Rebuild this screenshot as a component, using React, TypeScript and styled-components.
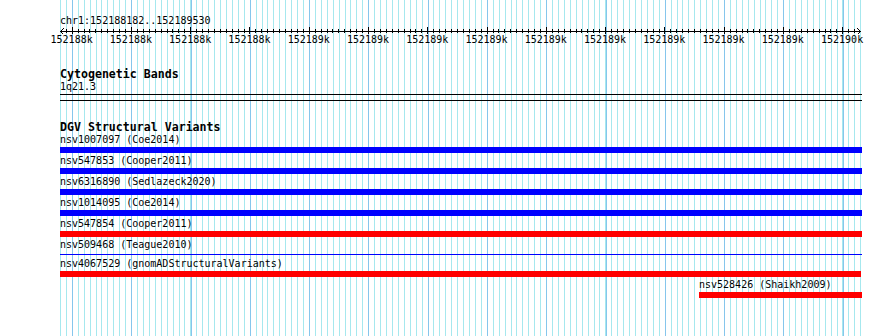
import React from "react";
import styled, { createGlobalStyle } from "styled-components";

const GlobalStyle = createGlobalStyle`
  html, body { margin: 0; padding: 0; background: #fff; }
`;

const MINOR = 5.928;
const MAJOR = MINOR * 10;
const GRID_LEFT = 59.8;
const GRID_LINES = 136;

type Variant = {
  name: string;
  study: string;
  color: "blue" | "red";
  thin?: boolean;
  left?: number;
  width?: number;
};

const variants: Variant[] = [
  { name: "nsv1007097", study: "Coe2014", color: "blue" },
  { name: "nsv547853", study: "Cooper2011", color: "blue" },
  { name: "nsv6316890", study: "Sedlazeck2020", color: "blue" },
  { name: "nsv1014095", study: "Coe2014", color: "blue" },
  { name: "nsv547854", study: "Cooper2011", color: "red" },
  { name: "nsv509468", study: "Teague2010", color: "blue", thin: true },
  { name: "nsv4067529", study: "gnomADStructuralVariants", color: "red", width: 801 },
  { name: "nsv528426", study: "Shaikh2009", color: "red", left: 639, width: 163 },
];

const tickLabels = [
  "152188k", "152188k", "152188k", "152188k", "152189k", "152189k", "152189k",
  "152189k", "152189k", "152189k", "152189k", "152189k", "152189k", "152190k",
];

const Panel = styled.div`
  width: 890px;
  height: 336px;
  overflow: hidden;
  background-color: #fff;
  background-image:
    repeating-linear-gradient(to right, #86c6ec 0 1px, transparent 1px ${MAJOR}px),
    repeating-linear-gradient(to right, #a6e8ee 0 1px, transparent 1px ${MINOR}px);
  background-position: ${GRID_LEFT + MINOR * 2}px 0, ${GRID_LEFT}px 0;
  background-size: 772px 100%, 801px 100%;
  background-repeat: no-repeat;
  font-family: "DejaVu Sans Mono", "Liberation Mono", monospace;
  font-size: 10px;
  line-height: 12px;
  color: #000;
  padding-top: 15px;
  box-sizing: border-box;
`;

const Indented = styled.div`
  padding-left: 60px;
  width: 802px;
`;

const Ruler = styled.svg`
  display: block;
`;

const TickRow = styled.div`
  display: flex;
  padding-left: ${GRID_LEFT + MINOR * 2 - MAJOR / 2}px;
`;

const TickLabel = styled.span`
  flex: 0 0 ${MAJOR}px;
  text-align: center;
  white-space: nowrap;
`;

const TrackTitle = styled.div<{ $gap: number }>`
  margin-top: ${(p) => p.$gap}px;
  font-weight: bold;
  font-size: 11.6px;
  line-height: 13px;
`;

const BandBox = styled.div`
  margin-top: 1px;
  height: 5px;
  border-top: 1px solid #000;
  border-bottom: 1px solid #000;
`;

const FeatureRow = styled.div<{ $left: number }>`
  padding-left: ${(p) => p.$left}px;
  margin-bottom: 2px;
`;

const FeatureLabel = styled.div`
  white-space: nowrap;
`;

const FeatureBar = styled.div<{ $color: string; $thin?: boolean }>`
  margin-top: 1px;
  height: 6px;
  background: ${(p) => (p.$thin ? "transparent" : p.$color === "red" ? "#ff0000" : "#0000ff")};
  box-sizing: border-box;
  ${(p) => (p.$thin ? `border-top: 1px solid #0000ff; height: 1px; margin-top: 3px; margin-bottom: 3px;` : "")}
`;

const RulerDrawing = () => {
  const ticks = [];
  for (let i = 1; i < GRID_LINES - 1; i++) {
    const x = Math.round(GRID_LEFT + i * MINOR) + 0.5;
    const major = i % 10 === 2;
    ticks.push(
      <line key={i} x1={x} x2={x} y1={major ? 0 : 2} y2={major ? 7 : 6} stroke="#000" />
    );
  }
  return (
    <Ruler width={890} height={7} shapeRendering="crispEdges">
      <line x1={60} x2={861} y1={4.5} y2={4.5} stroke="#000" />
      {ticks}
      <polyline points="64,1 60.5,4.5 64,8" fill="none" stroke="#000" />
      <polyline points="857,1 860.5,4.5 857,8" fill="none" stroke="#000" />
    </Ruler>
  );
};

export default function App() {
  return (
    <>
      <GlobalStyle />
      <Panel>
        <Indented>chr1:152188182..152189530</Indented>
        <RulerDrawing />
        <TickRow>
          {tickLabels.map((t, i) => (
            <TickLabel key={i}>{t}</TickLabel>
          ))}
        </TickRow>

        <Indented>
          <TrackTitle $gap={22}>Cytogenetic Bands</TrackTitle>
          <div>1q21.3</div>
          <BandBox />

          <TrackTitle $gap={20}>DGV Structural Variants</TrackTitle>
          {variants.map((v) => (
            <FeatureRow key={v.name} $left={v.left ?? 0}>
              <FeatureLabel>
                {v.name} ({v.study})
              </FeatureLabel>
              <FeatureBar
                $color={v.color}
                $thin={v.thin}
                style={{ width: v.width ?? 802 - (v.left ?? 0) }}
              />
            </FeatureRow>
          ))}
        </Indented>
      </Panel>
    </>
  );
}
